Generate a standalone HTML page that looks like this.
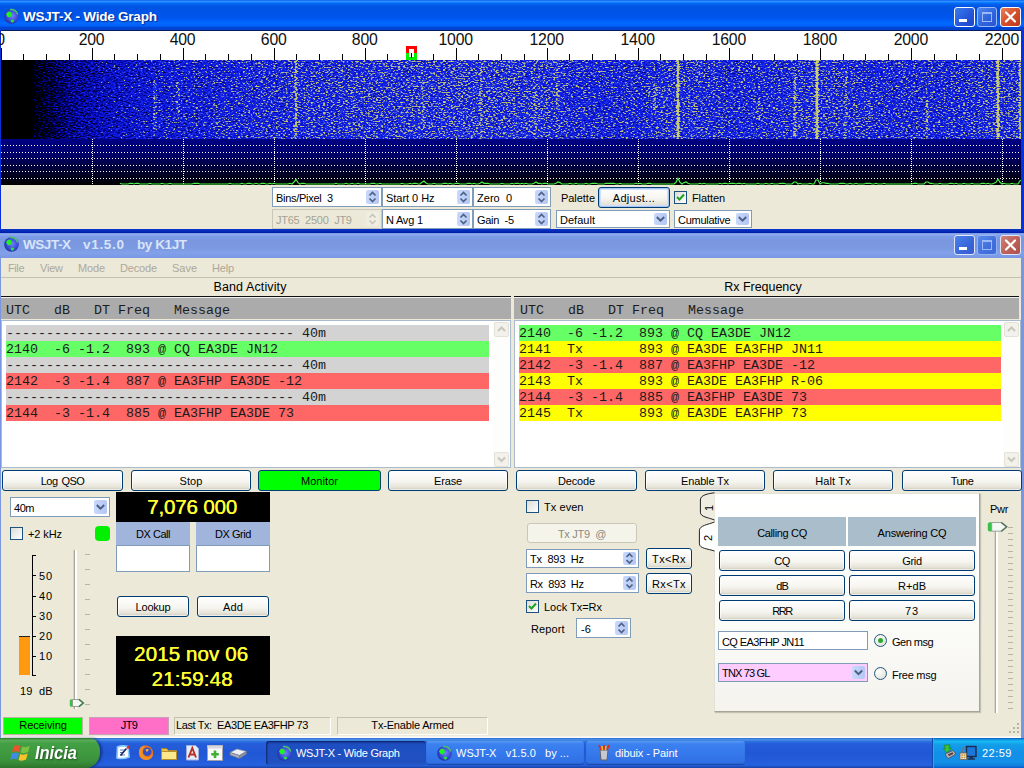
<!DOCTYPE html>
<html><head><meta charset="utf-8"><title>WSJT-X</title>
<style>
*{box-sizing:border-box;margin:0;padding:0}
html,body{width:1024px;height:768px;overflow:hidden;background:#ECE9D8;font-family:"Liberation Sans",sans-serif;font-size:11px;color:#000}
.a{position:absolute}
.t{position:absolute;white-space:nowrap;line-height:14px;font-size:11px}
.c{text-align:center}
.btn{position:absolute;border:1px solid #003C74;border-radius:3px;background:linear-gradient(#FFFFFF 0%,#F6F5F0 55%,#E6E3D8 85%,#CFCABC 100%);text-align:center;font-size:11px;line-height:18px;white-space:nowrap;box-shadow:inset 0 0 0 1px rgba(255,255,255,.6)}
.spin{position:absolute;background:#fff;border:1px solid #7F9DB9;font-size:11px;line-height:17px;padding-left:4px;white-space:nowrap;overflow:hidden}
.spin.dis{background:#ECE9D8;color:#A5A294;border-color:#C9C7BA}
.sb{position:absolute;right:2px;top:2px;bottom:2px;width:13px;background:linear-gradient(90deg,#C9D8FC,#B4C6F3);border-radius:2px}
.cb{position:absolute;width:13px;height:13px;border:1px solid #1C5180;background:linear-gradient(135deg,#DCDCD7,#FFFFFF)}
.row{position:absolute;height:16px;font-family:"Liberation Mono",monospace;font-size:13.33px;line-height:18px;white-space:pre;overflow:hidden;color:#1c1c1c}
.g{background:#66FF66}.r{background:#FF6666}.y{background:#FFFF00}.gr{background:#D3D3D3}
</style></head><body>
<!-- WIDE GRAPH -->
<div class="a" style="left:0;top:0;width:1024px;height:233px;background:linear-gradient(#0831D9 0,#0831D9 228px,#0A36CC 229px,#001EA6 233px)"></div>
<div class="a" style="left:0;top:0;width:1024px;height:30px;background:linear-gradient(#0058EE 0%,#3593FF 4%,#288EFF 6%,#127DFF 8%,#036FFC 10%,#0262EE 14%,#0057E5 20%,#0054E3 24%,#0055EB 56%,#005BF5 66%,#026AFE 76%,#0061FC 86%,#0144D0 92%,#0144D0 100%)"></div>
<svg class="a" style="left:3px;top:7px" width="18" height="18" viewBox="0 0 18 18"><defs><radialGradient id="gl" cx=".55" cy=".45" r=".6"><stop offset="0" stop-color="#7484F4"/><stop offset=".6" stop-color="#3C4CD8"/><stop offset="1" stop-color="#1C2A9C"/></radialGradient></defs><circle cx="8.500" cy="9.500" r="7.300" fill="url(#gl)"/><path d="M3.200 7.500 Q3.500 4.800 6 4.500 Q8.500 4.600 8.800 7 Q9 9.500 6.800 10.300 Q4 10.500 3.200 7.500Z" fill="#22F022"/><path d="M7.500 13 Q9.500 11.800 11.200 13 Q11.500 15 9.500 15.800 Q7.500 15.500 7.500 13Z" fill="#30D848"/><path d="M7 2.600 Q12.500 1.800 14.800 7.500" fill="none" stroke="#48C468" stroke-width="1.500"/></svg>
<div class="t" style="left:23px;top:9px;font-size:13.5px;letter-spacing:-0.22px;font-weight:bold;color:#fff;line-height:16px;text-shadow:1px 1px 1px #0A2A8C">WSJT-X - Wide Graph</div>
<div class="a" style="left:954px;top:7px;width:21px;height:20px;border:1px solid #fff;border-radius:3px;background:linear-gradient(135deg,#3B7BEE,#2455D8 60%,#1C46C8);"></div>
<div class="a" style="left:959px;top:19px;width:8px;height:3px;background:#fff"></div>
<div class="a" style="left:977px;top:7px;width:20px;height:20px;border:1px solid #9DB9F5;border-radius:3px;background:linear-gradient(135deg,#4C86EE,#2E62DC 60%,#2A56CE);"></div>
<div class="a" style="left:982px;top:12px;width:10px;height:10px;border:1px solid #9DB9F5;border-top-width:2px"></div>
<div class="a" style="left:1000px;top:7px;width:21px;height:20px;border:1px solid #fff;border-radius:3px;background:linear-gradient(135deg,#E8825C,#D6502C 50%,#B8391C);"></div>
<svg class="a" style="left:1000px;top:7px" width="21" height="20"><path d="M6 5.500 L15 14.500 M15 5.500 L6 14.500" stroke="#fff" stroke-width="2.2" stroke-linecap="round"/></svg>
<div class="a" style="left:1px;top:30px;width:1020px;height:30px;background:#fff;border-top:1px solid #0A1A5C"></div>
<svg class="a" style="left:0;top:30px" width="1021" height="30"><g fill="#000" shape-rendering="crispEdges"><rect x="1" y="18" width="1" height="12"/><rect x="23" y="24" width="1" height="6"/><rect x="46" y="24" width="1" height="6"/><rect x="69" y="24" width="1" height="6"/><rect x="92" y="18" width="1" height="12"/><rect x="114" y="24" width="1" height="6"/><rect x="137" y="24" width="1" height="6"/><rect x="160" y="24" width="1" height="6"/><rect x="183" y="18" width="1" height="12"/><rect x="205" y="24" width="1" height="6"/><rect x="228" y="24" width="1" height="6"/><rect x="251" y="24" width="1" height="6"/><rect x="274" y="18" width="1" height="12"/><rect x="296" y="24" width="1" height="6"/><rect x="319" y="24" width="1" height="6"/><rect x="342" y="24" width="1" height="6"/><rect x="365" y="18" width="1" height="12"/><rect x="387" y="24" width="1" height="6"/><rect x="410" y="24" width="1" height="6"/><rect x="433" y="24" width="1" height="6"/><rect x="456" y="18" width="1" height="12"/><rect x="478" y="24" width="1" height="6"/><rect x="501" y="24" width="1" height="6"/><rect x="524" y="24" width="1" height="6"/><rect x="547" y="18" width="1" height="12"/><rect x="569" y="24" width="1" height="6"/><rect x="592" y="24" width="1" height="6"/><rect x="615" y="24" width="1" height="6"/><rect x="638" y="18" width="1" height="12"/><rect x="660" y="24" width="1" height="6"/><rect x="683" y="24" width="1" height="6"/><rect x="706" y="24" width="1" height="6"/><rect x="729" y="18" width="1" height="12"/><rect x="752" y="24" width="1" height="6"/><rect x="774" y="24" width="1" height="6"/><rect x="797" y="24" width="1" height="6"/><rect x="820" y="18" width="1" height="12"/><rect x="843" y="24" width="1" height="6"/><rect x="865" y="24" width="1" height="6"/><rect x="888" y="24" width="1" height="6"/><rect x="911" y="18" width="1" height="12"/><rect x="934" y="24" width="1" height="6"/><rect x="956" y="24" width="1" height="6"/><rect x="979" y="24" width="1" height="6"/><rect x="1002" y="18" width="1" height="12"/></g><g shape-rendering="crispEdges"><rect x="406" y="16" width="11" height="7" fill="#F00"/><rect x="406" y="23" width="11" height="7" fill="#0E0"/><rect x="409" y="19" width="5" height="8" fill="#fff"/><rect x="411" y="23" width="1" height="5" fill="#000"/></g></svg>
<div class="t c" style="left:-29.4px;top:32px;width:60px;font-size:15.8px;line-height:16px;letter-spacing:-0.2px;color:#111">0</div>
<div class="t c" style="left:61.6px;top:32px;width:60px;font-size:15.8px;line-height:16px;letter-spacing:-0.2px;color:#111">200</div>
<div class="t c" style="left:152.6px;top:32px;width:60px;font-size:15.8px;line-height:16px;letter-spacing:-0.2px;color:#111">400</div>
<div class="t c" style="left:243.7px;top:32px;width:60px;font-size:15.8px;line-height:16px;letter-spacing:-0.2px;color:#111">600</div>
<div class="t c" style="left:334.7px;top:32px;width:60px;font-size:15.8px;line-height:16px;letter-spacing:-0.2px;color:#111">800</div>
<div class="t c" style="left:425.7px;top:32px;width:60px;font-size:15.8px;line-height:16px;letter-spacing:-0.2px;color:#111">1000</div>
<div class="t c" style="left:516.7px;top:32px;width:60px;font-size:15.8px;line-height:16px;letter-spacing:-0.2px;color:#111">1200</div>
<div class="t c" style="left:607.7px;top:32px;width:60px;font-size:15.8px;line-height:16px;letter-spacing:-0.2px;color:#111">1400</div>
<div class="t c" style="left:698.8px;top:32px;width:60px;font-size:15.8px;line-height:16px;letter-spacing:-0.2px;color:#111">1600</div>
<div class="t c" style="left:789.8px;top:32px;width:60px;font-size:15.8px;line-height:16px;letter-spacing:-0.2px;color:#111">1800</div>
<div class="t c" style="left:880.8px;top:32px;width:60px;font-size:15.8px;line-height:16px;letter-spacing:-0.2px;color:#111">2000</div>
<div class="t c" style="left:971.8px;top:32px;width:60px;font-size:15.8px;line-height:16px;letter-spacing:-0.2px;color:#111">2200</div>
<svg class="a" style="left:1px;top:60px" width="1020" height="79"><defs><filter id="nz" x="0" y="0" width="100%" height="100%" color-interpolation-filters="sRGB"><feTurbulence type="fractalNoise" baseFrequency="0.4 0.8" numOctaves="2" seed="7" result="n"/><feColorMatrix in="n" type="matrix" values="1 0 0 0 0  1 0 0 0 0  1 0 0 0 0  0 0 0 0 1" result="g"/><feComposite in="g" in2="SourceGraphic" operator="arithmetic" k1="0" k2="1" k3="1" k4="-0.5"/><feComponentTransfer><feFuncR type="table" tableValues="0.000 0.000 0.000 0.000 0.000 0.000 0.000 0.000 0.000 0.000 0.002 0.006 0.010 0.015 0.024 0.033 0.043 0.051 0.058 0.064 0.071 0.088 0.105 0.122 0.239 0.382 0.529 0.625 0.688 0.739 0.749 0.758 0.768 0.777 0.786 0.796 0.805 0.815 0.824 0.834 0.843"/><feFuncG type="table" tableValues="0.000 0.000 0.000 0.000 0.000 0.000 0.000 0.000 0.000 0.000 0.004 0.015 0.026 0.037 0.051 0.066 0.080 0.093 0.104 0.115 0.125 0.148 0.170 0.192 0.310 0.450 0.582 0.665 0.714 0.755 0.763 0.771 0.780 0.788 0.797 0.805 0.813 0.822 0.830 0.839 0.847"/><feFuncB type="table" tableValues="0.000 0.010 0.020 0.029 0.092 0.168 0.244 0.310 0.369 0.427 0.486 0.545 0.604 0.663 0.720 0.776 0.832 0.864 0.879 0.895 0.910 0.910 0.910 0.910 0.847 0.760 0.637 0.559 0.510 0.469 0.462 0.455 0.448 0.441 0.434 0.427 0.420 0.413 0.406 0.399 0.392"/></feComponentTransfer></filter><linearGradient id="lvl" gradientUnits="userSpaceOnUse" x1="0" x2="1020"><stop offset="0.0000" stop-color="#000000"/><stop offset="0.0324" stop-color="#000000"/><stop offset="0.0333" stop-color="#080808"/><stop offset="0.0412" stop-color="#171717"/><stop offset="0.0539" stop-color="#2b2b2b"/><stop offset="0.0686" stop-color="#454545"/><stop offset="0.1078" stop-color="#616161"/><stop offset="0.1569" stop-color="#737373"/><stop offset="0.2451" stop-color="#818181"/><stop offset="0.3235" stop-color="#868686"/><stop offset="0.3922" stop-color="#8a8a8a"/><stop offset="0.5294" stop-color="#8a8a8a"/><stop offset="0.5637" stop-color="#808080"/><stop offset="0.6275" stop-color="#808080"/><stop offset="0.6520" stop-color="#878787"/><stop offset="0.6863" stop-color="#878787"/><stop offset="0.7157" stop-color="#818181"/><stop offset="0.7647" stop-color="#828282"/><stop offset="0.7843" stop-color="#878787"/><stop offset="0.8235" stop-color="#868686"/><stop offset="0.8529" stop-color="#818181"/><stop offset="0.9412" stop-color="#828282"/><stop offset="0.9657" stop-color="#888888"/><stop offset="1.0000" stop-color="#888888"/></linearGradient></defs><g filter="url(#nz)"><rect width="1020" height="79" fill="url(#lvl)"/><rect x="293.0" y="0" width="4" height="79" fill="#949494"/><rect x="294.0" y="0" width="2" height="79" fill="#b0b0b0"/><rect x="420.0" y="20" width="4" height="50" fill="#8e8e8e"/><rect x="421.0" y="20" width="2" height="50" fill="#9e9e9e"/><rect x="478.0" y="5" width="4" height="74" fill="#8e8e8e"/><rect x="479.0" y="5" width="2" height="74" fill="#9e9e9e"/><rect x="532.0" y="25" width="4" height="50" fill="#8e8e8e"/><rect x="533.0" y="25" width="2" height="50" fill="#9e9e9e"/><rect x="554.0" y="0" width="4" height="50" fill="#8d8d8d"/><rect x="555.0" y="0" width="2" height="50" fill="#9c9c9c"/><rect x="652.0" y="25" width="4" height="30" fill="#8e8e8e"/><rect x="653.0" y="25" width="2" height="30" fill="#a1a1a1"/><rect x="675.0" y="0" width="4" height="79" fill="#9f9f9f"/><rect x="676.0" y="0" width="2" height="79" fill="#d1d1d1"/><rect x="756.0" y="40" width="4" height="20" fill="#8c8c8c"/><rect x="757.0" y="40" width="2" height="20" fill="#999999"/><rect x="792.0" y="15" width="4" height="64" fill="#919191"/><rect x="793.0" y="15" width="2" height="64" fill="#a8a8a8"/><rect x="814.0" y="0" width="4" height="79" fill="#a2a2a2"/><rect x="815.0" y="0" width="2" height="79" fill="#d9d9d9"/><rect x="924.0" y="40" width="4" height="39" fill="#8e8e8e"/><rect x="925.0" y="40" width="2" height="39" fill="#a1a1a1"/><rect x="995.0" y="0" width="4" height="79" fill="#9f9f9f"/><rect x="996.0" y="0" width="2" height="79" fill="#d1d1d1"/><rect x="1017.0" y="0" width="4" height="79" fill="#969696"/><rect x="1018.0" y="0" width="2" height="79" fill="#b8b8b8"/><rect x="305.0" y="20" width="4" height="40" fill="#898989"/><rect x="306.0" y="20" width="2" height="40" fill="#919191"/><rect x="350.0" y="20" width="4" height="30" fill="#898989"/><rect x="351.0" y="20" width="2" height="30" fill="#919191"/><rect x="843.0" y="10" width="4" height="69" fill="#8c8c8c"/><rect x="844.0" y="10" width="2" height="69" fill="#999999"/><rect x="867.0" y="30" width="4" height="30" fill="#8a8a8a"/><rect x="868.0" y="30" width="2" height="30" fill="#949494"/><rect x="152.0" y="20" width="4" height="50" fill="#898989"/><rect x="153.0" y="20" width="2" height="50" fill="#919191"/><rect x="175.0" y="20" width="4" height="40" fill="#898989"/><rect x="176.0" y="20" width="2" height="40" fill="#919191"/></g><rect width="33" height="79" fill="#000"/></svg>
<div class="a" style="left:1px;top:139px;width:1020px;height:46px;background:linear-gradient(#000084 0%,#000070 30%,#000038 65%,#000000 100%)"></div>
<svg class="a" style="left:0;top:139px" width="1021" height="46"><g stroke="#fff" stroke-width="1" stroke-dasharray="1 2" shape-rendering="crispEdges"><line x1="1" y1="6.5" x2="1023" y2="6.5"/><line x1="1" y1="13.5" x2="1023" y2="13.5"/><line x1="1" y1="19.5" x2="1023" y2="19.5"/><line x1="1" y1="26.5" x2="1023" y2="26.5"/><line x1="1" y1="32.5" x2="1023" y2="32.5"/><line x1="1" y1="39.5" x2="1023" y2="39.5"/><line x1="92.5" y1="0" x2="92.5" y2="46" stroke-dasharray="1 1"/><line x1="183.5" y1="0" x2="183.5" y2="46" stroke-dasharray="1 1"/><line x1="274.5" y1="0" x2="274.5" y2="46" stroke-dasharray="1 1"/><line x1="365.5" y1="0" x2="365.5" y2="46" stroke-dasharray="1 1"/><line x1="456.5" y1="0" x2="456.5" y2="46" stroke-dasharray="1 1"/><line x1="547.5" y1="0" x2="547.5" y2="46" stroke-dasharray="1 1"/><line x1="638.5" y1="0" x2="638.5" y2="46" stroke-dasharray="1 1"/><line x1="729.5" y1="0" x2="729.5" y2="46" stroke-dasharray="1 1"/><line x1="820.5" y1="0" x2="820.5" y2="46" stroke-dasharray="1 1"/><line x1="911.5" y1="0" x2="911.5" y2="46" stroke-dasharray="1 1"/><line x1="1002.5" y1="0" x2="1002.5" y2="46" stroke-dasharray="1 1"/></g><polyline points="120,44.3 122,45.0 124,45.0 126,45.0 128,45.0 130,44.3 132,44.3 134,45.0 136,44.3 138,44.3 140,45.0 142,45.0 144,45.0 146,45.0 148,45.0 150,44.3 152,45.0 154,45.0 156,45.0 158,45.0 160,45.0 162,44.3 164,45.0 166,45.0 168,45.0 170,44.3 172,45.0 174,45.0 176,45.0 178,45.0 180,45.0 182,45.0 184,45.0 186,45.0 188,45.0 190,45.0 192,45.0 194,44.3 196,44.3 198,44.3 200,45.0 202,45.0 204,45.0 206,45.0 208,45.0 210,45.0 212,45.0 214,45.0 216,45.0 218,45.0 220,45.0 222,45.0 224,45.0 226,45.0 228,45.0 230,44.3 232,45.0 234,45.0 236,45.0 238,45.0 240,45.0 242,44.3 244,45.0 246,45.0 248,44.3 250,44.3 252,45.0 254,45.0 256,44.3 258,45.0 260,45.0 262,44.3 264,44.3 266,45.0 268,45.0 270,44.3 272,45.0 274,44.3 276,45.0 278,45.0 280,45.0 282,45.0 284,45.0 286,45.0 288,45.0 290,44.3 292,45.0 294,43.0 296,40.3 298,43.7 300,45.0 302,44.3 304,44.3 306,45.0 308,45.0 310,45.0 312,45.0 314,45.0 316,45.0 318,45.0 320,45.0 322,45.0 324,45.0 326,45.0 328,45.0 330,45.0 332,45.0 334,45.0 336,44.3 338,45.0 340,45.0 342,45.0 344,45.0 346,44.3 348,45.0 350,45.0 352,44.3 354,45.0 356,45.0 358,44.3 360,45.0 362,45.0 364,45.0 366,45.0 368,45.0 370,45.0 372,44.3 374,44.3 376,45.0 378,45.0 380,44.3 382,45.0 384,45.0 386,45.0 388,45.0 390,45.0 392,45.0 394,45.0 396,45.0 398,45.0 400,45.0 402,44.3 404,45.0 406,45.0 408,45.0 410,44.3 412,45.0 414,44.3 416,44.3 418,45.0 420,45.0 422,43.3 424,42.0 426,44.0 428,45.0 430,45.0 432,45.0 434,44.3 436,45.0 438,45.0 440,45.0 442,45.0 444,44.3 446,44.3 448,45.0 450,44.3 452,45.0 454,45.0 456,44.3 458,44.3 460,45.0 462,45.0 464,45.0 466,45.0 468,44.3 470,44.3 472,45.0 474,44.3 476,45.0 478,45.0 480,44.3 482,43.0 484,44.3 486,44.3 488,44.3 490,45.0 492,45.0 494,45.0 496,45.0 498,45.0 500,45.0 502,44.3 504,45.0 506,45.0 508,45.0 510,45.0 512,44.3 514,45.0 516,44.3 518,44.3 520,45.0 522,44.3 524,45.0 526,44.3 528,45.0 530,45.0 532,45.0 534,44.3 536,43.0 538,44.3 540,44.3 542,45.0 544,44.3 546,44.3 548,45.0 550,45.0 552,45.0 554,45.0 556,44.3 558,43.0 560,43.6 562,45.0 564,45.0 566,45.0 568,45.0 570,44.3 572,45.0 574,45.0 576,44.3 578,45.0 580,45.0 582,45.0 584,45.0 586,44.3 588,45.0 590,45.0 592,44.3 594,44.3 596,44.3 598,45.0 600,45.0 602,45.0 604,45.0 606,44.3 608,44.3 610,44.3 612,44.3 614,44.3 616,45.0 618,45.0 620,44.3 622,45.0 624,45.0 626,45.0 628,45.0 630,45.0 632,45.0 634,45.0 636,44.3 638,45.0 640,44.3 642,45.0 644,45.0 646,45.0 648,44.3 650,44.3 652,45.0 654,45.0 656,45.0 658,45.0 660,45.0 662,45.0 664,45.0 666,45.0 668,45.0 670,45.0 672,45.0 674,45.0 676,43.3 678,39.3 680,43.3 682,45.0 684,43.6 686,43.0 688,44.3 690,45.0 692,45.0 694,45.0 696,45.0 698,45.0 700,44.3 702,45.0 704,44.3 706,45.0 708,45.0 710,45.0 712,45.0 714,45.0 716,45.0 718,45.0 720,44.3 722,45.0 724,44.3 726,44.3 728,45.0 730,44.3 732,44.3 734,44.3 736,45.0 738,44.3 740,44.3 742,45.0 744,44.3 746,45.0 748,45.0 750,45.0 752,45.0 754,45.0 756,45.0 758,44.3 760,45.0 762,45.0 764,45.0 766,44.3 768,45.0 770,45.0 772,44.3 774,45.0 776,45.0 778,45.0 780,44.3 782,44.3 784,44.3 786,45.0 788,45.0 790,45.0 792,45.0 794,43.0 796,43.0 798,45.0 800,44.3 802,45.0 804,45.0 806,45.0 808,45.0 810,44.3 812,45.0 814,45.0 816,41.0 818,41.0 820,45.0 822,43.7 824,43.7 826,44.3 828,44.3 830,45.0 832,45.0 834,45.0 836,45.0 838,45.0 840,44.3 842,44.3 844,44.3 846,45.0 848,45.0 850,44.3 852,45.0 854,45.0 856,44.3 858,45.0 860,45.0 862,45.0 864,45.0 866,44.3 868,44.3 870,44.3 872,45.0 874,45.0 876,44.3 878,45.0 880,45.0 882,45.0 884,44.3 886,45.0 888,45.0 890,45.0 892,45.0 894,45.0 896,45.0 898,45.0 900,45.0 902,45.0 904,45.0 906,45.0 908,45.0 910,45.0 912,45.0 914,44.3 916,44.3 918,45.0 920,45.0 922,45.0 924,45.0 926,43.0 928,43.0 930,44.3 932,44.3 934,45.0 936,45.0 938,45.0 940,44.3 942,45.0 944,45.0 946,45.0 948,45.0 950,44.3 952,44.3 954,45.0 956,44.3 958,45.0 960,45.0 962,45.0 964,44.3 966,45.0 968,45.0 970,45.0 972,44.3 974,45.0 976,45.0 978,45.0 980,45.0 982,44.3 984,44.3 986,45.0 988,44.3 990,45.0 992,45.0 994,44.3 996,43.3 998,40.0 1000,43.3 1002,45.0 1004,44.3 1006,45.0 1008,45.0 1010,45.0 1012,44.3 1014,45.0 1016,45.0 1018,45.0 1020,41.7 1022,41.0" fill="none" stroke="#48F048" stroke-width="1.15"/></svg>
<div class="a" style="left:1px;top:185px;width:1020px;height:44px;background:#ECE9D8"></div>
<div class="spin" style="left:272px;top:187px;width:110px;height:20px;line-height:20px;padding-left:3px;letter-spacing:-0.29px;">Bins/Pixel&nbsp; 3<div class="sb" style=""><svg width="13" height="14" style="position:absolute;left:0;top:0"><path d="M3.500 5.5 L6.500 2.5 L9.500 5.5" fill="none" stroke="#4D6185" stroke-width="1.700"/><path d="M3.500 8.5 L6.500 11.5 L9.500 8.5" fill="none" stroke="#4D6185" stroke-width="1.700"/></svg></div></div>
<div class="spin" style="left:382px;top:187px;width:91px;height:20px;line-height:20px;padding-left:3px;letter-spacing:-0.04px;">Start 0 Hz<div class="sb" style=""><svg width="13" height="14" style="position:absolute;left:0;top:0"><path d="M3.500 5.5 L6.500 2.5 L9.500 5.5" fill="none" stroke="#4D6185" stroke-width="1.700"/><path d="M3.500 8.5 L6.500 11.5 L9.500 8.5" fill="none" stroke="#4D6185" stroke-width="1.700"/></svg></div></div>
<div class="spin" style="left:473px;top:187px;width:78px;height:20px;line-height:20px;padding-left:3px;letter-spacing:0.03px;">Zero&nbsp; 0<div class="sb" style=""><svg width="13" height="14" style="position:absolute;left:0;top:0"><path d="M3.500 5.5 L6.500 2.5 L9.500 5.5" fill="none" stroke="#4D6185" stroke-width="1.700"/><path d="M3.500 8.5 L6.500 11.5 L9.500 8.5" fill="none" stroke="#4D6185" stroke-width="1.700"/></svg></div></div>
<div class="spin dis" style="left:272px;top:209px;width:110px;height:20px;line-height:20px;padding-left:3px;letter-spacing:-0.25px;">JT65&nbsp; 2500&nbsp; JT9<div class="sb" style="background:#F0EEE2;"><svg width="13" height="14" style="position:absolute;left:0;top:0"><path d="M3.500 5.5 L6.500 2.5 L9.500 5.5" fill="none" stroke="#C9C7BA" stroke-width="1.700"/><path d="M3.500 8.5 L6.500 11.5 L9.500 8.5" fill="none" stroke="#C9C7BA" stroke-width="1.700"/></svg></div></div>
<div class="spin" style="left:382px;top:209px;width:91px;height:20px;line-height:20px;padding-left:3px;letter-spacing:-0.22px;">N Avg 1<div class="sb" style=""><svg width="13" height="14" style="position:absolute;left:0;top:0"><path d="M3.500 5.5 L6.500 2.5 L9.500 5.5" fill="none" stroke="#4D6185" stroke-width="1.700"/><path d="M3.500 8.5 L6.500 11.5 L9.500 8.5" fill="none" stroke="#4D6185" stroke-width="1.700"/></svg></div></div>
<div class="spin" style="left:473px;top:209px;width:78px;height:20px;line-height:20px;padding-left:3px;letter-spacing:-0.30px;">Gain&nbsp; -5<div class="sb" style=""><svg width="13" height="14" style="position:absolute;left:0;top:0"><path d="M3.500 5.5 L6.500 2.5 L9.500 5.5" fill="none" stroke="#4D6185" stroke-width="1.700"/><path d="M3.500 8.5 L6.500 11.5 L9.500 8.5" fill="none" stroke="#4D6185" stroke-width="1.700"/></svg></div></div>
<div class="t" style="left:561px;top:191px;letter-spacing:-0.04px;">Palette</div>
<div class="btn" style="left:598px;top:187px;width:72px;height:21px;line-height:21px;letter-spacing:0.28px;border-color:#003C74;box-shadow:inset 0 0 0 1px #A8C4F0,inset 0 0 0 2px #CEE0FC">Adjust...</div>
<div class="cb" style="left:674px;top:191px"></div>
<svg class="a" style="left:674px;top:191px" width="13" height="13"><path d="M3 6 L5.5 8.5 L10 3.5" fill="none" stroke="#21A121" stroke-width="2"/></svg>
<div class="t" style="left:692px;top:191px;letter-spacing:-0.10px;">Flatten</div>
<div class="spin" style="left:556px;top:210px;width:114px;height:18px;line-height:18px;padding-left:3px;letter-spacing:0.02px;">Default<div class="sb"><svg width="13" height="12" style="position:absolute;left:0;top:0"><path d="M2.800 4.0 L6.500 7.7 L10.200 4.0" fill="none" stroke="#4D6185" stroke-width="2"/></svg></div></div>
<div class="spin" style="left:674px;top:210px;width:78px;height:18px;line-height:18px;padding-left:3px;letter-spacing:-0.28px;">Cumulative<div class="sb"><svg width="13" height="12" style="position:absolute;left:0;top:0"><path d="M2.800 4.0 L6.500 7.7 L10.200 4.0" fill="none" stroke="#4D6185" stroke-width="2"/></svg></div></div>
<!-- MAIN WINDOW -->
<div class="a" style="left:0;top:233px;width:1024px;height:505px;background:#7A96DF"></div>
<div class="a" style="left:0;top:233px;width:1024px;height:25px;background:linear-gradient(#7697E7 0%,#8FAAEF 6%,#7E9DE9 12%,#7A96DF 30%,#7B99E1 60%,#82A1EA 80%,#7C9BE6 92%,#7A96DF 100%)"></div>
<svg class="a" style="left:3px;top:235px" width="18" height="18" viewBox="0 0 18 18"><defs><radialGradient id="gl" cx=".55" cy=".45" r=".6"><stop offset="0" stop-color="#7484F4"/><stop offset=".6" stop-color="#3C4CD8"/><stop offset="1" stop-color="#1C2A9C"/></radialGradient></defs><circle cx="8.500" cy="9.500" r="7.300" fill="url(#gl)"/><path d="M3.200 7.500 Q3.500 4.800 6 4.500 Q8.500 4.600 8.800 7 Q9 9.500 6.800 10.300 Q4 10.500 3.200 7.500Z" fill="#22F022"/><path d="M7.500 13 Q9.500 11.800 11.200 13 Q11.500 15 9.500 15.800 Q7.500 15.500 7.500 13Z" fill="#30D848"/><path d="M7 2.600 Q12.500 1.800 14.800 7.500" fill="none" stroke="#48C468" stroke-width="1.500"/></svg>
<div class="t" style="left:23px;top:237px;font-size:13.5px;letter-spacing:-0.45px;font-weight:bold;color:#D8E4F8;line-height:16px">WSJT-X</div>
<div class="t" style="left:83px;top:237px;font-size:13.5px;letter-spacing:0.69px;font-weight:bold;color:#D8E4F8;line-height:16px">v1.5.0</div>
<div class="t" style="left:137px;top:237px;font-size:13.5px;letter-spacing:-0.42px;font-weight:bold;color:#D8E4F8;line-height:16px">by K1JT</div>
<div class="a" style="left:954px;top:235px;width:21px;height:20px;border:1px solid #fff;border-radius:3px;background:linear-gradient(135deg,#3B7BEE,#2455D8 60%,#1C46C8);opacity:.75;"></div>
<div class="a" style="left:959px;top:247px;width:8px;height:3px;background:#fff"></div>
<div class="a" style="left:977px;top:235px;width:20px;height:20px;border:1px solid #9DB9F5;border-radius:3px;background:linear-gradient(135deg,#4C86EE,#2E62DC 60%,#2A56CE);opacity:.75;"></div>
<div class="a" style="left:982px;top:240px;width:10px;height:10px;border:1px solid #9DB9F5;border-top-width:2px"></div>
<div class="a" style="left:1000px;top:235px;width:21px;height:20px;border:1px solid #fff;border-radius:3px;background:linear-gradient(135deg,#E8825C,#D6502C 50%,#B8391C);opacity:.75;"></div>
<svg class="a" style="left:1000px;top:235px" width="21" height="20"><path d="M6 5.500 L15 14.500 M15 5.500 L6 14.500" stroke="#fff" stroke-width="2.2" stroke-linecap="round"/></svg>
<div class="a" style="left:1px;top:258px;width:1020px;height:480px;background:#ECE9D8"></div>
<div class="t" style="left:8px;top:261px;letter-spacing:-0.41px;color:#ACA899">File</div>
<div class="t" style="left:40px;top:261px;letter-spacing:-0.21px;color:#ACA899">View</div>
<div class="t" style="left:78px;top:261px;letter-spacing:-0.17px;color:#ACA899">Mode</div>
<div class="t" style="left:120px;top:261px;letter-spacing:-0.18px;color:#ACA899">Decode</div>
<div class="t" style="left:172px;top:261px;letter-spacing:-0.02px;color:#ACA899">Save</div>
<div class="t" style="left:212px;top:261px;letter-spacing:-0.21px;color:#ACA899">Help</div>
<div class="a" style="left:1px;top:277px;width:1020px;height:1px;background:#C5C2B2"></div>
<div class="t c" style="left:150px;top:280px;width:200px;font-size:12.5px;letter-spacing:0.12px;">Band Activity</div>
<div class="t c" style="left:663px;top:280px;width:200px;font-size:12.5px;letter-spacing:-0.03px;">Rx Frequency</div>
<div class="a" style="left:1px;top:296px;width:510px;height:1px;background:#111"></div>
<div class="a" style="left:514px;top:296px;width:505px;height:1px;background:#111"></div>
<div class="a" style="left:1px;top:297px;width:510px;height:22px;background:#ABABAB;border-top:1px solid #F0F0EE"></div>
<div class="a" style="left:514px;top:297px;width:505px;height:22px;background:#ABABAB;border-top:1px solid #F0F0EE"></div>
<div class="row" style="left:6px;top:302px;width:400px">UTC   dB   DT Freq   Message</div>
<div class="row" style="left:520px;top:302px;width:400px">UTC   dB   DT Freq   Message</div>
<div class="a" style="left:1px;top:320px;width:510px;height:148px;background:#fff;border:1px solid #A9BBCD"></div>
<div class="a" style="left:514px;top:320px;width:507px;height:148px;background:#fff;border:1px solid #A9BBCD"></div>
<div class="row gr" style="left:6px;top:325px;width:483px">------------------------------------ 40m</div>
<div class="row g" style="left:6px;top:341px;width:483px">2140  -6 -1.2  893 @ CQ EA3DE JN12</div>
<div class="row gr" style="left:6px;top:357px;width:483px">------------------------------------ 40m</div>
<div class="row r" style="left:6px;top:373px;width:483px">2142  -3 -1.4  887 @ EA3FHP EA3DE -12</div>
<div class="row gr" style="left:6px;top:389px;width:483px">------------------------------------ 40m</div>
<div class="row r" style="left:6px;top:405px;width:483px">2144  -3 -1.4  885 @ EA3FHP EA3DE 73</div>
<div class="row g" style="left:519px;top:325px;width:482px">2140  -6 -1.2  893 @ CQ EA3DE JN12</div>
<div class="row y" style="left:519px;top:341px;width:482px">2141  Tx       893 @ EA3DE EA3FHP JN11</div>
<div class="row r" style="left:519px;top:357px;width:482px">2142  -3 -1.4  887 @ EA3FHP EA3DE -12</div>
<div class="row y" style="left:519px;top:373px;width:482px">2143  Tx       893 @ EA3DE EA3FHP R-06</div>
<div class="row r" style="left:519px;top:389px;width:482px">2144  -3 -1.4  885 @ EA3FHP EA3DE 73</div>
<div class="row y" style="left:519px;top:405px;width:482px">2145  Tx       893 @ EA3DE EA3FHP 73</div>
<div class="a" style="left:493px;top:321px;width:17px;height:146px;background:#FDFDFB"></div>
<div class="a" style="left:494px;top:322px;width:15px;height:15px;border:1px solid #E4E2D6;border-radius:2px;background:#F3F1EC"></div>
<svg class="a" style="left:494px;top:322px" width="15" height="15"><path d="M4.5 9 L8 5.5 L11.5 9" transform="translate(-0.5,0)" fill="none" stroke="#C9C7BA" stroke-width="2"/></svg>
<div class="a" style="left:494px;top:452px;width:15px;height:15px;border:1px solid #E4E2D6;border-radius:2px;background:#F3F1EC"></div>
<svg class="a" style="left:494px;top:452px" width="15" height="15"><path d="M4.5 5.5 L8 9 L11.5 5.5" transform="translate(-0.5,0)" fill="none" stroke="#C9C7BA" stroke-width="2"/></svg>
<div class="a" style="left:1003px;top:321px;width:17px;height:146px;background:#FDFDFB"></div>
<div class="a" style="left:1004px;top:322px;width:15px;height:15px;border:1px solid #E4E2D6;border-radius:2px;background:#F3F1EC"></div>
<svg class="a" style="left:1004px;top:322px" width="15" height="15"><path d="M4.5 9 L8 5.5 L11.5 9" transform="translate(-0.5,0)" fill="none" stroke="#C9C7BA" stroke-width="2"/></svg>
<div class="a" style="left:1004px;top:452px;width:15px;height:15px;border:1px solid #E4E2D6;border-radius:2px;background:#F3F1EC"></div>
<svg class="a" style="left:1004px;top:452px" width="15" height="15"><path d="M4.5 5.5 L8 9 L11.5 5.5" transform="translate(-0.5,0)" fill="none" stroke="#C9C7BA" stroke-width="2"/></svg>
<div class="btn" style="left:2px;top:470px;width:121px;height:21px;line-height:21px;letter-spacing:-0.56px;word-spacing:1.5px">Log QSO</div>
<div class="btn" style="left:131px;top:470px;width:120px;height:21px;line-height:21px;letter-spacing:0.12px;">Stop</div>
<div class="btn" style="left:258px;top:470px;width:123px;height:21px;line-height:21px;letter-spacing:0.05px;background:#00FF00;box-shadow:none">Monitor</div>
<div class="btn" style="left:388px;top:470px;width:120px;height:21px;line-height:21px;letter-spacing:-0.18px;">Erase</div>
<div class="btn" style="left:516px;top:470px;width:121px;height:21px;line-height:21px;letter-spacing:-0.18px;">Decode</div>
<div class="btn" style="left:645px;top:470px;width:120px;height:21px;line-height:21px;letter-spacing:-0.17px;">Enable Tx</div>
<div class="btn" style="left:773px;top:470px;width:120px;height:21px;line-height:21px;letter-spacing:0.14px;">Halt Tx</div>
<div class="btn" style="left:902px;top:470px;width:120px;height:21px;line-height:21px;letter-spacing:-0.55px;">Tune</div>
<div class="spin" style="left:10px;top:497px;width:100px;height:20px;line-height:20px;padding-left:3px;letter-spacing:-0.45px;">40m<div class="sb"><svg width="13" height="14" style="position:absolute;left:0;top:0"><path d="M2.800 5.0 L6.500 8.7 L10.200 5.0" fill="none" stroke="#4D6185" stroke-width="2"/></svg></div></div>
<div class="cb" style="left:10px;top:527px"></div>
<div class="t" style="left:28px;top:527px;letter-spacing:-0.11px;">+2 kHz</div>
<div class="a" style="left:95px;top:526px;width:15px;height:15px;background:#00F000;border-radius:4px"></div>
<div class="a" style="left:116px;top:492px;width:154px;height:30px;background:#000"></div>
<div class="t c" style="left:115px;top:495px;width:154px;font-size:20.5px;letter-spacing:-0.15px;line-height:24px;color:#FFFF33;text-shadow:.4px 0 0 #FFFF33">7,076 000</div>
<div class="a" style="left:116px;top:522px;width:74px;height:23px;background:#A0B4DC"></div>
<div class="a" style="left:196px;top:522px;width:74px;height:23px;background:#A0B4DC"></div>
<div class="t c" style="left:116px;top:527px;width:74px;letter-spacing:-0.46px;">DX Call</div>
<div class="t c" style="left:196px;top:527px;width:74px;letter-spacing:-0.44px;">DX Grid</div>
<div class="a" style="left:116px;top:545px;width:74px;height:27px;background:#fff;border:1px solid #7F9DB9"></div>
<div class="a" style="left:196px;top:545px;width:74px;height:27px;background:#fff;border:1px solid #7F9DB9"></div>
<div class="btn" style="left:117px;top:596px;width:72px;height:21px;line-height:21px;letter-spacing:-0.22px;">Lookup</div>
<div class="btn" style="left:197px;top:596px;width:72px;height:21px;line-height:21px;letter-spacing:0.21px;">Add</div>
<div class="a" style="left:116px;top:636px;width:154px;height:59px;background:#000"></div>
<div class="t c" style="left:114px;top:641px;width:154px;font-size:20.5px;letter-spacing:0.11px;line-height:25px;color:#FFFF33;text-shadow:.4px 0 0 #FFFF33">2015 nov 06</div>
<div class="t c" style="left:115px;top:666px;width:154px;font-size:20.5px;letter-spacing:0.17px;line-height:25px;color:#FFFF33;text-shadow:.4px 0 0 #FFFF33">21:59:48</div>
<svg class="a" style="left:0;top:550px" width="115" height="165"><g fill="#000" shape-rendering="crispEdges"><rect x="32" y="5" width="1" height="121"/><rect x="32" y="5" width="4" height="1"/><rect x="32" y="125" width="4" height="1"/><rect x="32" y="25" width="4" height="1"/><rect x="32" y="46" width="4" height="1"/><rect x="32" y="66" width="4" height="1"/><rect x="32" y="86" width="4" height="1"/><rect x="32" y="106" width="4" height="1"/><rect x="19" y="87" width="11" height="38" fill="#FF9A10"/><rect x="19" y="86" width="11" height="1" fill="#222"/></g><g shape-rendering="crispEdges"><rect x="74" y="-2" width="1" height="161" fill="#ACA899"/><rect x="75" y="-2" width="2" height="161" fill="#fff"/><rect x="73" y="-2" width="1" height="161" fill="#D8D5C6"/><rect x="85" y="4" width="5" height="1" fill="#B8B5A6"/><rect x="85" y="19" width="5" height="1" fill="#B8B5A6"/><rect x="85" y="34" width="5" height="1" fill="#B8B5A6"/><rect x="85" y="49" width="5" height="1" fill="#B8B5A6"/><rect x="85" y="64" width="5" height="1" fill="#B8B5A6"/><rect x="85" y="79" width="5" height="1" fill="#B8B5A6"/><rect x="85" y="94" width="5" height="1" fill="#B8B5A6"/><rect x="85" y="109" width="5" height="1" fill="#B8B5A6"/><rect x="85" y="124" width="5" height="1" fill="#B8B5A6"/><rect x="85" y="139" width="5" height="1" fill="#B8B5A6"/><rect x="85" y="154" width="5" height="1" fill="#B8B5A6"/></g><rect x="69.800" y="149.200" width="4" height="7.600" rx="1.500" fill="#38C048"/><path d="M72.500 149.500 h6.500 l4 3.500 l-4 3.500 h-6.500 z" fill="#F2F8F2" stroke="#8A988A" stroke-width="0.900"/><path d="M79 149.400 l4.300 3.600 l-4.300 3.600" fill="none" stroke="#3E7A4A" stroke-width="1.500"/></svg>
<div class="t" style="left:39px;top:569px;letter-spacing:0.76px;">50</div>
<div class="t" style="left:39px;top:589px;letter-spacing:0.76px;">40</div>
<div class="t" style="left:39px;top:609px;letter-spacing:0.76px;">30</div>
<div class="t" style="left:39px;top:629px;letter-spacing:0.76px;">20</div>
<div class="t" style="left:39px;top:649px;letter-spacing:0.76px;">10</div>
<div class="t" style="left:20px;top:684px;letter-spacing:0.14px;">19&nbsp; dB</div>
<div class="a" style="left:3px;top:717px;width:80px;height:18px;background:#00FF00;border:1px solid #B8B5A6"></div>
<div class="t c" style="left:3px;top:718px;width:80px;letter-spacing:-0.10px;">Receiving</div>
<div class="a" style="left:89px;top:717px;width:80px;height:18px;background:#FF6EC7;border:1px solid #C8A0B8"></div>
<div class="t c" style="left:89px;top:718px;width:80px;letter-spacing:-0.67px;">JT9</div>
<div class="a" style="left:174px;top:717px;width:157px;height:18px;border:1px solid #C5C2B2;border-bottom-color:#fff;border-right-color:#fff"></div>
<div class="t" style="left:176px;top:718px;letter-spacing:-0.40px;">Last Tx:&nbsp; EA3DE EA3FHP 73</div>
<div class="a" style="left:337px;top:717px;width:151px;height:18px;border:1px solid #C5C2B2;border-bottom-color:#fff;border-right-color:#fff"></div>
<div class="t c" style="left:337px;top:718px;width:151px;letter-spacing:-0.18px;">Tx-Enable Armed</div>
<div class="cb" style="left:526px;top:500px"></div>
<div class="t" style="left:544px;top:500px;letter-spacing:0.06px;">Tx even</div>
<div class="a" style="left:527px;top:523px;width:110px;height:20px;border:1px solid #C9C7BA;border-radius:3px;background:#F5F4EA"></div>
<div class="t c" style="left:527px;top:527px;width:110px;letter-spacing:-0.30px;color:#8C8A80">Tx JT9&nbsp; @</div>
<div class="spin" style="left:526px;top:549px;width:113px;height:19px;line-height:19px;padding-left:3px;letter-spacing:-0.22px;">Tx&nbsp; 893&nbsp; Hz<div class="sb" style=""><svg width="13" height="13" style="position:absolute;left:0;top:0"><path d="M3.500 5.0 L6.500 2.0 L9.500 5.0" fill="none" stroke="#4D6185" stroke-width="1.700"/><path d="M3.500 8.0 L6.500 11.0 L9.500 8.0" fill="none" stroke="#4D6185" stroke-width="1.700"/></svg></div></div>
<div class="spin" style="left:526px;top:573px;width:113px;height:20px;line-height:20px;padding-left:3px;letter-spacing:-0.35px;">Rx&nbsp; 893&nbsp; Hz<div class="sb" style=""><svg width="13" height="14" style="position:absolute;left:0;top:0"><path d="M3.500 5.5 L6.500 2.5 L9.500 5.5" fill="none" stroke="#4D6185" stroke-width="1.700"/><path d="M3.500 8.5 L6.500 11.5 L9.500 8.5" fill="none" stroke="#4D6185" stroke-width="1.700"/></svg></div></div>
<div class="btn" style="left:646px;top:548px;width:46px;height:21px;line-height:21px;letter-spacing:0.35px;">Tx&lt;Rx</div>
<div class="btn" style="left:646px;top:573px;width:46px;height:21px;line-height:21px;letter-spacing:0.35px;">Rx&lt;Tx</div>
<div class="cb" style="left:526px;top:600px"></div>
<svg class="a" style="left:526px;top:600px" width="13" height="13"><path d="M3 6 L5.5 8.5 L10 3.5" fill="none" stroke="#21A121" stroke-width="2"/></svg>
<div class="t" style="left:544px;top:600px;letter-spacing:-0.02px;">Lock Tx=Rx</div>
<div class="t" style="left:531px;top:622px;letter-spacing:0.10px;">Report</div>
<div class="spin" style="left:576px;top:618px;width:55px;height:20px;line-height:20px;padding-left:4px;">-6<div class="sb" style=""><svg width="13" height="14" style="position:absolute;left:0;top:0"><path d="M3.500 5.5 L6.500 2.5 L9.500 5.5" fill="none" stroke="#4D6185" stroke-width="1.700"/><path d="M3.500 8.5 L6.500 11.5 L9.500 8.5" fill="none" stroke="#4D6185" stroke-width="1.700"/></svg></div></div>
<div class="a" style="left:714px;top:493px;width:266px;height:219px;background:linear-gradient(#FFFFFF,#FBFBF8 60%,#F4F3EE);border:1px solid #E4E2D6;border-right-color:#A8A598;border-bottom-color:#A8A598;box-shadow:1px 1px 1px #C4C1B2"></div>
<svg class="a" style="left:697px;top:490px" width="20" height="66"><path d="M17.500 2.800 C11 3.600 3.400 5 3.400 10 L3.400 22.200 C3.400 27 11 27.400 17.500 30 Z" fill="#EFEDE2" stroke="none"/><path d="M17.500 2.800 C11 3.600 3.400 5 3.400 10 L3.400 22.200 C3.400 27 11 27.400 17.500 30" fill="none" stroke="#222" stroke-width="1"/><path d="M18 32 C11 34.600 2.400 35.500 2.400 40.500 L2.400 53.800 C2.400 58.500 11 58.800 18 61 Z" fill="#FEFEFD" stroke="none"/><path d="M17.500 32 C11 34.600 2.400 35.500 2.400 40.500 L2.400 53.800 C2.400 58.500 11 58.800 17.500 61" fill="none" stroke="#222" stroke-width="1"/><rect x="17" y="33" width="2" height="27" fill="#FEFEFD"/></svg>
<div class="t" style="left:702px;top:511px;transform:rotate(-90deg);transform-origin:0 0">1</div>
<div class="t" style="left:701px;top:541px;transform:rotate(-90deg);transform-origin:0 0">2</div>
<div class="a" style="left:718px;top:517px;width:128px;height:29px;background:#A9BDCB"></div>
<div class="a" style="left:848px;top:517px;width:128px;height:29px;background:#A9BDCB"></div>
<div class="t c" style="left:718px;top:526px;width:128px;letter-spacing:-0.35px;">Calling CQ</div>
<div class="t c" style="left:848px;top:526px;width:128px;letter-spacing:-0.17px;">Answering CQ</div>
<div class="btn" style="left:719px;top:550px;width:126px;height:21px;line-height:21px;letter-spacing:-0.50px;">CQ</div>
<div class="btn" style="left:849px;top:550px;width:126px;height:21px;line-height:21px;letter-spacing:-0.26px;">Grid</div>
<div class="btn" style="left:719px;top:575px;width:126px;height:21px;line-height:21px;letter-spacing:-0.95px;">dB</div>
<div class="btn" style="left:849px;top:575px;width:126px;height:21px;line-height:21px;letter-spacing:0.06px;">R+dB</div>
<div class="btn" style="left:719px;top:600px;width:126px;height:21px;line-height:21px;letter-spacing:-1.42px;">RRR</div>
<div class="btn" style="left:849px;top:600px;width:126px;height:21px;line-height:21px;letter-spacing:0.76px;">73</div>
<div class="a" style="left:718px;top:631px;width:150px;height:19px;background:#fff;border:1px solid #7F9DB9"></div>
<div class="t" style="left:722px;top:635px;letter-spacing:-0.58px;">CQ EA3FHP JN11</div>
<div class="spin" style="left:718px;top:663px;width:150px;height:19px;line-height:19px;padding-left:3px;letter-spacing:-0.82px;background:#FFCCFF">TNX 73 GL<div class="sb"><svg width="13" height="13" style="position:absolute;left:0;top:0"><path d="M2.800 4.5 L6.500 8.2 L10.200 4.5" fill="none" stroke="#4D6185" stroke-width="2"/></svg></div></div>
<div class="a" style="left:874px;top:634px;width:13px;height:13px;border:1px solid #21577F;border-radius:50%;background:radial-gradient(circle at 35% 35%,#FDFDFB,#DCDCD4)"></div>
<div class="a" style="left:878px;top:638px;width:5px;height:5px;border-radius:50%;background:#2FA82F"></div>
<div class="a" style="left:874px;top:667px;width:13px;height:13px;border:1px solid #21577F;border-radius:50%;background:radial-gradient(circle at 35% 35%,#FDFDFB,#DCDCD4)"></div>
<div class="t" style="left:892px;top:635px;letter-spacing:-0.52px;">Gen msg</div>
<div class="t" style="left:892px;top:668px;letter-spacing:-0.28px;">Free msg</div>
<div class="t" style="left:990px;top:502px;letter-spacing:-0.22px;">Pwr</div>
<svg class="a" style="left:984px;top:518px" width="36" height="200"><g shape-rendering="crispEdges"><rect x="11" y="8" width="1" height="187" fill="#ACA899"/><rect x="12" y="8" width="2" height="187" fill="#fff"/><rect x="10" y="8" width="1" height="187" fill="#D8D5C6"/><rect x="24" y="9" width="5" height="1" fill="#B8B5A6"/><rect x="24" y="15" width="5" height="1" fill="#B8B5A6"/><rect x="24" y="21" width="5" height="1" fill="#B8B5A6"/><rect x="24" y="27" width="5" height="1" fill="#B8B5A6"/><rect x="24" y="33" width="5" height="1" fill="#B8B5A6"/><rect x="24" y="39" width="5" height="1" fill="#B8B5A6"/><rect x="24" y="45" width="5" height="1" fill="#B8B5A6"/><rect x="24" y="51" width="5" height="1" fill="#B8B5A6"/><rect x="24" y="57" width="5" height="1" fill="#B8B5A6"/><rect x="24" y="63" width="5" height="1" fill="#B8B5A6"/><rect x="24" y="69" width="5" height="1" fill="#B8B5A6"/><rect x="24" y="75" width="5" height="1" fill="#B8B5A6"/><rect x="24" y="81" width="5" height="1" fill="#B8B5A6"/><rect x="24" y="87" width="5" height="1" fill="#B8B5A6"/><rect x="24" y="93" width="5" height="1" fill="#B8B5A6"/><rect x="24" y="99" width="5" height="1" fill="#B8B5A6"/><rect x="24" y="105" width="5" height="1" fill="#B8B5A6"/><rect x="24" y="112" width="5" height="1" fill="#B8B5A6"/><rect x="24" y="118" width="5" height="1" fill="#B8B5A6"/><rect x="24" y="124" width="5" height="1" fill="#B8B5A6"/><rect x="24" y="130" width="5" height="1" fill="#B8B5A6"/><rect x="24" y="136" width="5" height="1" fill="#B8B5A6"/><rect x="24" y="142" width="5" height="1" fill="#B8B5A6"/><rect x="24" y="148" width="5" height="1" fill="#B8B5A6"/><rect x="24" y="154" width="5" height="1" fill="#B8B5A6"/><rect x="24" y="160" width="5" height="1" fill="#B8B5A6"/><rect x="24" y="166" width="5" height="1" fill="#B8B5A6"/><rect x="24" y="172" width="5" height="1" fill="#B8B5A6"/><rect x="24" y="178" width="5" height="1" fill="#B8B5A6"/><rect x="24" y="184" width="5" height="1" fill="#B8B5A6"/><rect x="24" y="190" width="5" height="1" fill="#B8B5A6"/></g><rect x="3.800" y="4.200" width="5" height="9.300" rx="2" fill="#38C048"/><path d="M7.700 4.500 h9.500 l5.300 4.350 l-5.300 4.350 h-9.500 z" fill="#F4F9F4" stroke="#909C90" stroke-width="0.900"/><path d="M17.200 4.400 l5.500 4.450 l-5.500 4.450" fill="none" stroke="#5A7560" stroke-width="1.500"/></svg>
<svg class="a" style="left:1008px;top:722px" width="14" height="14"><g fill="#B8B5A6"><rect x="9" y="1" width="2" height="2"/><rect x="5" y="5" width="2" height="2"/><rect x="9" y="5" width="2" height="2"/><rect x="1" y="9" width="2" height="2"/><rect x="5" y="9" width="2" height="2"/><rect x="9" y="9" width="2" height="2"/></g></svg>
<div class="a" style="left:1px;top:736px;width:1020px;height:2px;background:linear-gradient(#F2F0E6,#FFFFFF)"></div>
<!-- TASKBAR -->
<div class="a" style="left:0;top:738px;width:1024px;height:30px;background:linear-gradient(#3168D5 0%,#4993E6 6%,#2B6FE0 12%,#245DDB 20%,#2157D5 50%,#245DDB 80%,#2663E0 90%,#1941A5 100%)"></div>
<div class="a" style="left:0;top:738px;width:100px;height:30px;background:linear-gradient(#2E7A2E 0%,#58AC58 8%,#44A044 18%,#3F9A3F 50%,#398F39 80%,#2C742C 100%);border-radius:0 10px 14px 0/0 14px 16px 0;box-shadow:2px 0 3px rgba(0,0,40,.45)"></div>
<svg class="a" style="left:10px;top:743px" width="21" height="20" viewBox="0 0 21 20"><g transform="skewX(-6) translate(2,0)"><path d="M2 3 Q5 1.500 9 3 L8 9 Q5 7.500 1 9Z" fill="#E8542C"/><path d="M10.500 3.500 Q14 5 18 3 L17 9 Q13.500 11 9.500 9.500Z" fill="#7CC242"/><path d="M0.800 10.500 Q4 9 8 10.500 L7 16.500 Q3.500 15 0 16.500Z" fill="#3F8CE8"/><path d="M9.300 11 Q13 12.500 16.800 10.500 L15.800 16.500 Q12 18.500 8.300 17Z" fill="#F8C42C"/></g></svg>
<div class="t" style="left:35px;top:741px;font-size:18px;line-height:24px;font-weight:bold;font-style:italic;color:#fff;text-shadow:1px 1px 2px #1F4F1F;transform:scaleX(.92);transform-origin:0 0;letter-spacing:-0.1px">Inicia</div>
<svg class="a" style="left:112px;top:742px" width="140" height="22"><g><path d="M5.500 5 Q10 3 16 4.500 L17 15 Q11 17.500 5 16 Z" fill="#FFFFFF" stroke="#8CCBFF" stroke-width="1.600"/><path d="M8 8 h5 M8 10.500 h3 M8 13 h5" stroke="#5078C8" stroke-width="1"/><path d="M8.500 13.500 L14.500 6.500" stroke="#203060" stroke-width="1.800"/><circle cx="16.300" cy="5.300" r="1.500" fill="#E03020"/></g><g><circle cx="34" cy="10.800" r="7.200" fill="#E8701C"/><circle cx="35.200" cy="9.800" r="4.300" fill="#3450C8"/><path d="M27 9 Q28 3.500 34 3.600 Q30.500 5.500 30.500 9.500 Q30.500 14.500 36 15.500 Q39.500 15 41 11 Q41 17.500 34 18 Q27 17.500 27 9Z" fill="#F09028"/><path d="M33.500 7.500 q2 -1 3.500 0.500 q-2 .5 -2 2.500z" fill="#F8C038"/></g><g><path d="M49.500 6.500 h5 l2 2 h8 v9 h-15z" fill="#E8C048" stroke="#B08820" stroke-width=".9"/><path d="M49.500 9.500 h15 v8 h-15z" fill="#FCE88C" stroke="#B08820" stroke-width=".9"/></g><g><path d="M74.500 3.500 h9 l3 3 v11.500 h-12z" fill="#E4ECFA" stroke="#9CB0DC"/><path d="M76.500 15.500 L80.300 6 L84 15.500 M77.800 12.500 h5" stroke="#B83020" stroke-width="1.900" fill="none"/></g><g><rect x="95.500" y="3.500" width="15" height="15" fill="#FAFAFA" stroke="#A0A0A8"/><rect x="95.500" y="3.500" width="15" height="3" fill="#D8D8E0"/><path d="M103 8.500 v7.500 M99.200 12.200 h7.600" stroke="#40B030" stroke-width="2.600"/></g><g><path d="M118 10.500 l7 -3.500 l9.500 2.500 l-7 4z" fill="#EEF0F4" stroke="#8890A0" stroke-width=".7"/><path d="M118 10.500 v2.500 l9.500 3.500 v-3z" fill="#B0B4C0" stroke="#707888" stroke-width=".7"/><path d="M127.500 13.500 l7 -4 v2.500 l-7 4.500z" fill="#8C92A0" stroke="#707888" stroke-width=".7"/></g></svg>
<div class="a" style="left:266px;top:741px;width:160px;height:24px;border-radius:3px;background:linear-gradient(#1A42A8 0%,#1E4FC2 15%,#2050C0 85%,#2458C8 100%);box-shadow:inset 1px 1px 2px rgba(0,0,40,.55);"></div>
<svg class="a" style="left:276px;top:744px" width="18" height="18" viewBox="0 0 18 18"><defs><radialGradient id="gl" cx=".55" cy=".45" r=".6"><stop offset="0" stop-color="#7484F4"/><stop offset=".6" stop-color="#3C4CD8"/><stop offset="1" stop-color="#1C2A9C"/></radialGradient></defs><circle cx="8.500" cy="9.500" r="7.300" fill="url(#gl)"/><path d="M3.200 7.500 Q3.500 4.800 6 4.500 Q8.500 4.600 8.800 7 Q9 9.500 6.800 10.300 Q4 10.500 3.200 7.500Z" fill="#22F022"/><path d="M7.500 13 Q9.500 11.800 11.200 13 Q11.500 15 9.500 15.800 Q7.500 15.500 7.500 13Z" fill="#30D848"/><path d="M7 2.600 Q12.500 1.800 14.800 7.500" fill="none" stroke="#48C468" stroke-width="1.500"/></svg>
<div class="t" style="left:296px;top:746px;letter-spacing:-0.27px;color:#fff;white-space:pre">WSJT-X - Wide Graph</div>
<div class="a" style="left:426px;top:741px;width:158px;height:24px;border-radius:3px;background:linear-gradient(#5B9BF5 0%,#3C81F0 12%,#3579EC 50%,#3071E4 88%,#2862D2 100%);box-shadow:inset 0 -1px 1px rgba(0,0,60,.3);"></div>
<svg class="a" style="left:436px;top:744px" width="18" height="18" viewBox="0 0 18 18"><defs><radialGradient id="gl" cx=".55" cy=".45" r=".6"><stop offset="0" stop-color="#7484F4"/><stop offset=".6" stop-color="#3C4CD8"/><stop offset="1" stop-color="#1C2A9C"/></radialGradient></defs><circle cx="8.500" cy="9.500" r="7.300" fill="url(#gl)"/><path d="M3.200 7.500 Q3.500 4.800 6 4.500 Q8.500 4.600 8.800 7 Q9 9.500 6.800 10.300 Q4 10.500 3.200 7.500Z" fill="#22F022"/><path d="M7.500 13 Q9.500 11.800 11.200 13 Q11.500 15 9.500 15.800 Q7.500 15.500 7.500 13Z" fill="#30D848"/><path d="M7 2.600 Q12.500 1.800 14.800 7.500" fill="none" stroke="#48C468" stroke-width="1.500"/></svg>
<div class="t" style="left:456px;top:746px;letter-spacing:0.02px;color:#fff;white-space:pre">WSJT-X   v1.5.0   by ...</div>
<div class="a" style="left:586px;top:741px;width:159px;height:24px;border-radius:3px;background:linear-gradient(#5B9BF5 0%,#3C81F0 12%,#3579EC 50%,#3071E4 88%,#2862D2 100%);box-shadow:inset 0 -1px 1px rgba(0,0,60,.3);"></div>
<svg class="a" style="left:595px;top:744px" width="18" height="18"><path d="M5 6 h8 l-1 10 h-6z" fill="#C8C8D0" stroke="#606068"/><path d="M6 6 L4 1 M9 6 V1 M12 6 L14 1" stroke="#D83020" stroke-width="1.800"/><path d="M7.500 6 L7 2 M10.500 6 L11 2" stroke="#E8C020" stroke-width="1.500"/></svg>
<div class="t" style="left:615px;top:746px;letter-spacing:-0.08px;color:#fff;white-space:pre">dibuix - Paint</div>
<div class="a" style="left:932px;top:738px;width:92px;height:30px;background:linear-gradient(#0C59B9 0%,#139EE9 6%,#18B8F4 12%,#139EE9 22%,#1290E8 50%,#1290E8 80%,#0F7EDC 92%,#095BC9 100%);border-left:1px solid #0D4CA8;box-shadow:inset 1px 0 0 #17B0F0"></div>
<svg class="a" style="left:940px;top:743px" width="40" height="20"><g><path d="M5 11 L13 7.500 L16 11 L8 15.600Z" fill="#B8BCC0" stroke="#505860" stroke-width=".9"/><path d="M7.800 11.300 L12.500 9.200 L13.700 10.800 L8.900 13.300Z" fill="#6A3A3A"/><path d="M4 2.300 L10 1.800 L9.200 5.200 L11.600 5.200 L7 9.800 L3.300 5.700 L5.400 5.700Z" fill="#3CC03C" stroke="#1E8A1E" stroke-width=".8"/></g><g><path d="M22 10 Q22 4 28 3.300" fill="none" stroke="#6C7488" stroke-width="1.600"/><rect x="26.500" y="3.500" width="9.500" height="10" fill="#1C78D8" stroke="#1A2C50" stroke-width="1.400"/><rect x="29.500" y="13.500" width="3.500" height="2" fill="#1A2C50"/><rect x="27.500" y="15.300" width="7.500" height="1.400" fill="#1A2C50"/><rect x="20" y="10" width="6.500" height="6.500" fill="#ECE4D4" stroke="#7A6448" stroke-width=".8"/><rect x="21.300" y="11.300" width="1.600" height="1.600" fill="#C89838"/><rect x="23.700" y="11.300" width="1.600" height="1.600" fill="#C89838"/><rect x="21.300" y="13.700" width="1.600" height="1.600" fill="#C89838"/><rect x="23.700" y="13.700" width="1.600" height="1.600" fill="#C89838"/></g></svg>
<div class="t" style="left:982px;top:746px;letter-spacing:0.49px;color:#fff">22:59</div>
</body></html>
